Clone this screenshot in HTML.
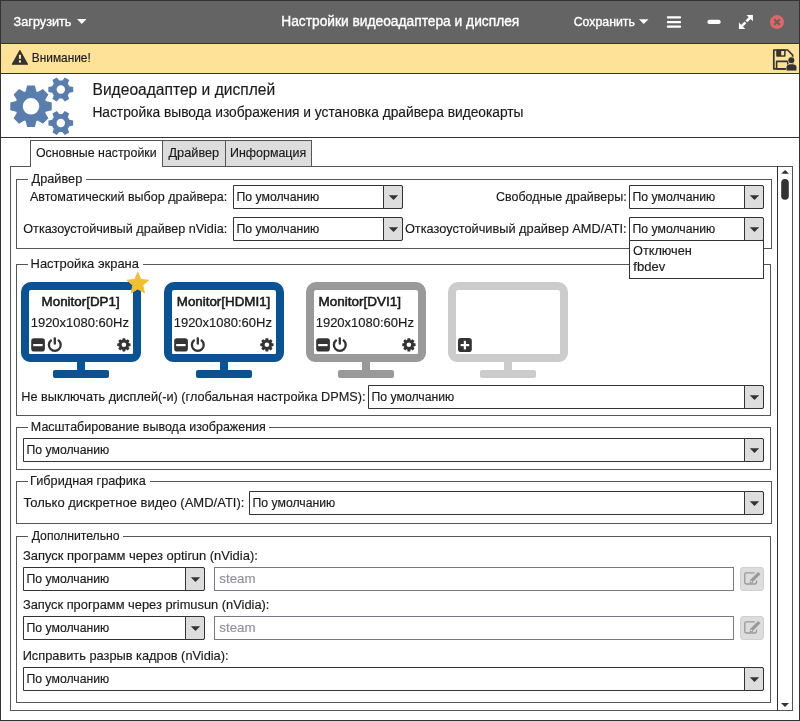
<!DOCTYPE html><html><head><meta charset="utf-8"><style>
html,body{margin:0;padding:0;background:#fff;}
body{width:800px;height:721px;position:relative;overflow:hidden;font-family:"Liberation Sans",sans-serif;}
#w{position:absolute;left:0;top:0;width:800px;height:721px;will-change:transform;background:#fff;}
.t{position:absolute;white-space:nowrap;line-height:1;-webkit-text-stroke:0.15px currentColor;}
.r{position:absolute;box-sizing:border-box;}
svg{position:absolute;left:0;top:0;}
</style></head><body><div id="w">
<div class="r" style="left:0px;top:0px;width:800px;height:721px;border:1px solid #333;"></div>
<div class="r" style="left:1px;top:1px;width:798px;height:42px;background:#646464;"></div>
<div class="r" style="left:1px;top:43px;width:798px;height:1px;background:#333;"></div>
<div class="r" style="left:1px;top:44px;width:798px;height:29px;background:#fee298;"></div>
<div class="r" style="left:1px;top:73px;width:798px;height:1px;background:#333;"></div>
<div class="r" style="left:1px;top:137px;width:798px;height:1px;background:#333;"></div>
<div class="t" style="left:13.62px;top:15.875px;font-size:12.67px;color:#fff;font-weight:400;-webkit-text-stroke:0.35px #fff">Загрузить</div>
<div class="t" style="left:281.2px;top:14.910px;font-size:13.78px;color:#fff;font-weight:400;-webkit-text-stroke:0.35px #fff">Настройки видеоадаптера и дисплея</div>
<div class="t" style="left:573.68px;top:15.979px;font-size:12.34px;color:#fff;font-weight:400;-webkit-text-stroke:0.35px #fff">Сохранить</div>
<div class="t" style="left:31.8px;top:52.719px;font-size:11.88px;color:#1a1a1a;font-weight:400;">Внимание!</div>
<div class="t" style="left:92.5px;top:82.020px;font-size:15.6px;color:#1a1a1a;font-weight:400;">Видеоадаптер и дисплей</div>
<div class="t" style="left:92.4px;top:105.919px;font-size:13.77px;color:#1a1a1a;font-weight:400;">Настройка вывода изображения и установка драйвера видеокарты</div>
<div class="r" style="left:10px;top:166px;width:783px;height:545px;border:1px solid #555;"></div>
<div class="r" style="left:162px;top:140px;width:64px;height:27px;background:#ddd;border:1px solid #555;"></div>
<div class="r" style="left:225px;top:140px;width:87px;height:27px;background:#ddd;border:1px solid #555;"></div>
<div class="r" style="left:30px;top:140px;width:133px;height:27px;background:#fff;border:1px solid #555;border-bottom:none;"></div>
<div class="t" style="left:35.9px;top:146.987px;font-size:12.39px;color:#1a1a1a;font-weight:400;">Основные настройки</div>
<div class="t" style="left:168.5px;top:146.841px;font-size:12.74px;color:#1a1a1a;font-weight:400;">Драйвер</div>
<div class="t" style="left:230px;top:146.970px;font-size:12.44px;color:#1a1a1a;font-weight:400;">Информация</div>
<div class="r" style="left:777px;top:166px;width:1px;height:545px;background:#333;"></div>
<div class="r" style="left:16px;top:179px;width:756px;height:70px;border:1px solid #555;"></div>
<div class="r" style="left:28px;top:179px;width:58px;height:1px;background:#fff;"></div>
<div class="t" style="left:31.6px;top:172.849px;font-size:12.73px;color:#1a1a1a;font-weight:400;">Драйвер</div>
<div class="t" style="left:30px;top:190.927px;font-size:12.52px;color:#1a1a1a;font-weight:400;">Автоматический выбор драйвера:</div>
<div class="t" style="left:23.29px;top:222.884px;font-size:12.63px;color:#1a1a1a;font-weight:400;">Отказоустойчивый драйвер nVidia:</div>
<div class="r" style="left:233px;top:185px;width:170px;height:24px;border:1px solid #333;background:#fff;border-radius:0 2px 2px 0;"></div>
<div class="r" style="left:383px;top:185px;width:20px;height:24px;border:1px solid #333;background:#ddd;border-radius:0 2px 2px 0;"></div>
<svg style="left:388px;top:195px" width="11" height="6"><path d="M0.8,0.2 L10.2,0.2 L5.5,4.9 Z" fill="#333"/></svg>
<div class="t" style="left:236.52px;top:191.014px;font-size:12.24px;color:#1a1a1a;font-weight:400;">По умолчанию</div>
<div class="r" style="left:233px;top:217px;width:170px;height:24px;border:1px solid #333;background:#fff;border-radius:0 2px 2px 0;"></div>
<div class="r" style="left:383px;top:217px;width:20px;height:24px;border:1px solid #333;background:#ddd;border-radius:0 2px 2px 0;"></div>
<svg style="left:388px;top:227px" width="11" height="6"><path d="M0.8,0.2 L10.2,0.2 L5.5,4.9 Z" fill="#333"/></svg>
<div class="t" style="left:236.52px;top:223.014px;font-size:12.24px;color:#1a1a1a;font-weight:400;">По умолчанию</div>
<div class="t" style="left:495.98px;top:190.961px;font-size:12.48px;color:#1a1a1a;font-weight:400;">Свободные драйверы:</div>
<div class="t" style="left:404.89px;top:222.840px;font-size:12.77px;color:#1a1a1a;font-weight:400;">Отказоустойчивый драйвер AMD/ATI:</div>
<div class="r" style="left:629px;top:185px;width:135px;height:24px;border:1px solid #333;background:#fff;border-radius:0 2px 2px 0;"></div>
<div class="r" style="left:744px;top:185px;width:20px;height:24px;border:1px solid #333;background:#ddd;border-radius:0 2px 2px 0;"></div>
<svg style="left:749px;top:195px" width="11" height="6"><path d="M0.8,0.2 L10.2,0.2 L5.5,4.9 Z" fill="#333"/></svg>
<div class="t" style="left:632.52px;top:191.014px;font-size:12.24px;color:#1a1a1a;font-weight:400;">По умолчанию</div>
<div class="r" style="left:16px;top:264px;width:755px;height:152px;border:1px solid #555;"></div>
<div class="r" style="left:28px;top:264px;width:115px;height:1px;background:#fff;"></div>
<div class="t" style="left:30.56px;top:257.754px;font-size:12.96px;color:#1a1a1a;font-weight:400;">Настройка экрана</div>
<div class="t" style="left:21.33px;top:390.866px;font-size:12.71px;color:#1a1a1a;font-weight:400;">Не выключать дисплей(-и) (глобальная настройка DPMS):</div>
<div class="r" style="left:368px;top:385px;width:396px;height:24px;border:1px solid #333;background:#fff;border-radius:0 2px 2px 0;"></div>
<div class="r" style="left:744px;top:385px;width:20px;height:24px;border:1px solid #333;background:#ddd;border-radius:0 2px 2px 0;"></div>
<svg style="left:749px;top:395px" width="11" height="6"><path d="M0.8,0.2 L10.2,0.2 L5.5,4.9 Z" fill="#333"/></svg>
<div class="t" style="left:371.52px;top:391.014px;font-size:12.24px;color:#1a1a1a;font-weight:400;">По умолчанию</div>
<div class="r" style="left:16px;top:427px;width:755px;height:43px;border:1px solid #555;"></div>
<div class="r" style="left:28px;top:427px;width:241px;height:1px;background:#fff;"></div>
<div class="t" style="left:30.85px;top:420.952px;font-size:12.49px;color:#1a1a1a;font-weight:400;">Масштабирование вывода изображения</div>
<div class="r" style="left:23px;top:438px;width:741px;height:24px;border:1px solid #333;background:#fff;border-radius:0 2px 2px 0;"></div>
<div class="r" style="left:744px;top:438px;width:20px;height:24px;border:1px solid #333;background:#ddd;border-radius:0 2px 2px 0;"></div>
<svg style="left:749px;top:448px" width="11" height="6"><path d="M0.8,0.2 L10.2,0.2 L5.5,4.9 Z" fill="#333"/></svg>
<div class="t" style="left:26.52px;top:444.014px;font-size:12.24px;color:#1a1a1a;font-weight:400;">По умолчанию</div>
<div class="r" style="left:16px;top:481px;width:756px;height:43px;border:1px solid #555;"></div>
<div class="r" style="left:28px;top:481px;width:122px;height:1px;background:#fff;"></div>
<div class="t" style="left:30.08px;top:474.858px;font-size:12.69px;color:#1a1a1a;font-weight:400;">Гибридная графика</div>
<div class="t" style="left:23.39px;top:496.020px;font-size:13.0px;color:#1a1a1a;font-weight:400;">Только дискретное видео (AMD/ATI):</div>
<div class="r" style="left:249px;top:491px;width:515px;height:24px;border:1px solid #333;background:#fff;border-radius:0 2px 2px 0;"></div>
<div class="r" style="left:744px;top:491px;width:20px;height:24px;border:1px solid #333;background:#ddd;border-radius:0 2px 2px 0;"></div>
<svg style="left:749px;top:501px" width="11" height="6"><path d="M0.8,0.2 L10.2,0.2 L5.5,4.9 Z" fill="#333"/></svg>
<div class="t" style="left:252.52px;top:497.014px;font-size:12.24px;color:#1a1a1a;font-weight:400;">По умолчанию</div>
<div class="r" style="left:16px;top:536px;width:755px;height:167px;border:1px solid #555;"></div>
<div class="r" style="left:28px;top:536px;width:95px;height:1px;background:#fff;"></div>
<div class="t" style="left:31.7px;top:530.022px;font-size:12.23px;color:#1a1a1a;font-weight:400;">Дополнительно</div>
<div class="t" style="left:22.91px;top:549.754px;font-size:12.96px;color:#1a1a1a;font-weight:400;">Запуск программ через optirun (nVidia):</div>
<div class="r" style="left:23px;top:567px;width:182px;height:24px;border:1px solid #333;background:#fff;border-radius:0 2px 2px 0;"></div>
<div class="r" style="left:185px;top:567px;width:20px;height:24px;border:1px solid #333;background:#ddd;border-radius:0 2px 2px 0;"></div>
<svg style="left:190px;top:577px" width="11" height="6"><path d="M0.8,0.2 L10.2,0.2 L5.5,4.9 Z" fill="#333"/></svg>
<div class="t" style="left:26.52px;top:573.014px;font-size:12.24px;color:#1a1a1a;font-weight:400;">По умолчанию</div>
<div class="r" style="left:214px;top:567px;width:520px;height:24px;border:1px solid #787887;background:#fff;"></div>
<div class="t" style="left:219.34px;top:572.017px;font-size:13.3px;color:#90909a;font-weight:400;">steam</div>
<div class="r" style="left:740px;top:567px;width:24px;height:24px;background:#ddd;border:1px solid #d0d0d0;border-radius:3px;"></div>
<svg width="800" height="721"><g transform="translate(0,0)"><path d="M754.7,572.8 L746.2,572.8 Q744.8,572.8 744.8,574.2 L744.8,582.6 Q744.8,584 746.2,584 L755.1,584 Q756.5,584 756.5,582.6 L756.5,580.5" fill="none" stroke="#999" stroke-width="1.3"/><path d="M751.5,580.9 L759.3,573.1" stroke="#999" stroke-width="3.3"/><path d="M749.6,583.4 L750.2,579.6 L753.3,582.7 Z" fill="#999"/><circle cx="751.2" cy="581.6" r="0.75" fill="#f4f4f4"/></g></svg>
<div class="t" style="left:22.91px;top:598.797px;font-size:12.85px;color:#1a1a1a;font-weight:400;">Запуск программ через primusun (nVidia):</div>
<div class="r" style="left:23px;top:616px;width:182px;height:24px;border:1px solid #333;background:#fff;border-radius:0 2px 2px 0;"></div>
<div class="r" style="left:185px;top:616px;width:20px;height:24px;border:1px solid #333;background:#ddd;border-radius:0 2px 2px 0;"></div>
<svg style="left:190px;top:626px" width="11" height="6"><path d="M0.8,0.2 L10.2,0.2 L5.5,4.9 Z" fill="#333"/></svg>
<div class="t" style="left:26.52px;top:622.014px;font-size:12.24px;color:#1a1a1a;font-weight:400;">По умолчанию</div>
<div class="r" style="left:214px;top:616px;width:520px;height:24px;border:1px solid #787887;background:#fff;"></div>
<div class="t" style="left:219.34px;top:621.017px;font-size:13.3px;color:#90909a;font-weight:400;">steam</div>
<div class="r" style="left:740px;top:616px;width:24px;height:24px;background:#ddd;border:1px solid #d0d0d0;border-radius:3px;"></div>
<svg width="800" height="721"><g transform="translate(0,49)"><path d="M754.7,572.8 L746.2,572.8 Q744.8,572.8 744.8,574.2 L744.8,582.6 Q744.8,584 746.2,584 L755.1,584 Q756.5,584 756.5,582.6 L756.5,580.5" fill="none" stroke="#999" stroke-width="1.3"/><path d="M751.5,580.9 L759.3,573.1" stroke="#999" stroke-width="3.3"/><path d="M749.6,583.4 L750.2,579.6 L753.3,582.7 Z" fill="#999"/><circle cx="751.2" cy="581.6" r="0.75" fill="#f4f4f4"/></g></svg>
<div class="t" style="left:22.67px;top:649.806px;font-size:12.81px;color:#1a1a1a;font-weight:400;">Исправить разрыв кадров (nVidia):</div>
<div class="r" style="left:23px;top:667px;width:741px;height:24px;border:1px solid #333;background:#fff;border-radius:0 2px 2px 0;"></div>
<div class="r" style="left:744px;top:667px;width:20px;height:24px;border:1px solid #333;background:#ddd;border-radius:0 2px 2px 0;"></div>
<svg style="left:749px;top:677px" width="11" height="6"><path d="M0.8,0.2 L10.2,0.2 L5.5,4.9 Z" fill="#333"/></svg>
<div class="t" style="left:26.52px;top:673.014px;font-size:12.24px;color:#1a1a1a;font-weight:400;">По умолчанию</div>
<div class="r" style="left:21px;top:282px;width:120px;height:80px;border:8px solid #095294;border-radius:10px 10px 9px 9px;"></div>
<div class="r" style="left:77px;top:362px;width:8px;height:8px;background:#095294;"></div>
<div class="r" style="left:53px;top:370px;width:56px;height:8px;background:#095294;border-radius:2px;"></div>
<div class="t" style="left:41.6px;top:294.990px;font-size:13.39px;color:#1a1a1a;font-weight:400;-webkit-text-stroke:0.55px #1a1a1a">Monitor[DP1]</div>
<div class="t" style="left:30.689999999999998px;top:315.979px;font-size:12.99px;color:#1a1a1a;font-weight:400;">1920x1080:60Hz</div>
<svg width="800" height="721"><rect x="31.2" y="338.3" width="13.7" height="13.2" rx="2.8" fill="#333"/><rect x="33.2" y="344" width="9.4" height="2.2" fill="#fff"/><path d="M58.59,340.43 A5.9,5.9 0 1,1 51.01,340.43" fill="none" stroke="#333" stroke-width="2.3" stroke-linecap="round"/><path d="M54.8,338.34999999999997 L54.8,343.65" stroke="#333" stroke-width="2.3" stroke-linecap="round"/><path fill-rule="evenodd" fill="#333" d="M122.20,340.10 L122.60,338.13 L125.20,338.13 L125.60,340.10 A5.0,5.0 0 0,1 126.02,340.27 L127.70,339.16 L129.54,341.00 L128.43,342.68 A5.0,5.0 0 0,1 128.60,343.10 L130.57,343.50 L130.57,346.10 L128.60,346.50 A5.0,5.0 0 0,1 128.43,346.92 L129.54,348.60 L127.70,350.44 L126.02,349.33 A5.0,5.0 0 0,1 125.60,349.50 L125.20,351.47 L122.60,351.47 L122.20,349.50 A5.0,5.0 0 0,1 121.78,349.33 L120.10,350.44 L118.26,348.60 L119.37,346.92 A5.0,5.0 0 0,1 119.20,346.50 L117.23,346.10 L117.23,343.50 L119.20,343.10 A5.0,5.0 0 0,1 119.37,342.68 L118.26,341.00 L120.10,339.16 L121.78,340.27 A5.0,5.0 0 0,1 122.20,340.10 Z M126.20,344.80 A2.3,2.3 0 1,0 121.60,344.80 A2.3,2.3 0 1,0 126.20,344.80 Z"/><path d="M137.80,272.40 L140.86,279.49 L148.55,280.21 L142.75,285.31 L144.44,292.84 L137.80,288.90 L131.16,292.84 L132.85,285.31 L127.05,280.21 L134.74,279.49 Z" fill="#f0c030" stroke="#f0c030" stroke-width="1" stroke-linejoin="round"/></svg>
<div class="r" style="left:164px;top:282px;width:120px;height:80px;border:8px solid #095294;border-radius:10px 10px 9px 9px;"></div>
<div class="r" style="left:220px;top:362px;width:8px;height:8px;background:#095294;"></div>
<div class="r" style="left:196px;top:370px;width:56px;height:8px;background:#095294;border-radius:2px;"></div>
<div class="t" style="left:176.75px;top:295.016px;font-size:13.36px;color:#1a1a1a;font-weight:400;-webkit-text-stroke:0.55px #1a1a1a">Monitor[HDMI1]</div>
<div class="t" style="left:173.69px;top:315.979px;font-size:12.99px;color:#1a1a1a;font-weight:400;">1920x1080:60Hz</div>
<svg width="800" height="721"><rect x="174.2" y="338.3" width="13.7" height="13.2" rx="2.8" fill="#333"/><rect x="176.2" y="344" width="9.4" height="2.2" fill="#fff"/><path d="M201.59,340.43 A5.9,5.9 0 1,1 194.01,340.43" fill="none" stroke="#333" stroke-width="2.3" stroke-linecap="round"/><path d="M197.8,338.34999999999997 L197.8,343.65" stroke="#333" stroke-width="2.3" stroke-linecap="round"/><path fill-rule="evenodd" fill="#333" d="M265.20,340.10 L265.60,338.13 L268.20,338.13 L268.60,340.10 A5.0,5.0 0 0,1 269.02,340.27 L270.70,339.16 L272.54,341.00 L271.43,342.68 A5.0,5.0 0 0,1 271.60,343.10 L273.57,343.50 L273.57,346.10 L271.60,346.50 A5.0,5.0 0 0,1 271.43,346.92 L272.54,348.60 L270.70,350.44 L269.02,349.33 A5.0,5.0 0 0,1 268.60,349.50 L268.20,351.47 L265.60,351.47 L265.20,349.50 A5.0,5.0 0 0,1 264.78,349.33 L263.10,350.44 L261.26,348.60 L262.37,346.92 A5.0,5.0 0 0,1 262.20,346.50 L260.23,346.10 L260.23,343.50 L262.20,343.10 A5.0,5.0 0 0,1 262.37,342.68 L261.26,341.00 L263.10,339.16 L264.78,340.27 A5.0,5.0 0 0,1 265.20,340.10 Z M269.20,344.80 A2.3,2.3 0 1,0 264.60,344.80 A2.3,2.3 0 1,0 269.20,344.80 Z"/></svg>
<div class="r" style="left:306px;top:282px;width:120px;height:80px;border:8px solid #999999;border-radius:10px 10px 9px 9px;"></div>
<div class="r" style="left:362px;top:362px;width:8px;height:8px;background:#999999;"></div>
<div class="r" style="left:338px;top:370px;width:56px;height:8px;background:#999999;border-radius:2px;"></div>
<div class="t" style="left:318.6px;top:294.989px;font-size:13.51px;color:#1a1a1a;font-weight:400;-webkit-text-stroke:0.55px #1a1a1a">Monitor[DVI1]</div>
<div class="t" style="left:315.69px;top:315.979px;font-size:12.99px;color:#1a1a1a;font-weight:400;">1920x1080:60Hz</div>
<svg width="800" height="721"><rect x="316.2" y="338.3" width="13.7" height="13.2" rx="2.8" fill="#333"/><rect x="318.2" y="344" width="9.4" height="2.2" fill="#fff"/><path d="M343.59,340.43 A5.9,5.9 0 1,1 336.01,340.43" fill="none" stroke="#333" stroke-width="2.3" stroke-linecap="round"/><path d="M339.8,338.34999999999997 L339.8,343.65" stroke="#333" stroke-width="2.3" stroke-linecap="round"/><path fill-rule="evenodd" fill="#333" d="M407.20,340.10 L407.60,338.13 L410.20,338.13 L410.60,340.10 A5.0,5.0 0 0,1 411.02,340.27 L412.70,339.16 L414.54,341.00 L413.43,342.68 A5.0,5.0 0 0,1 413.60,343.10 L415.57,343.50 L415.57,346.10 L413.60,346.50 A5.0,5.0 0 0,1 413.43,346.92 L414.54,348.60 L412.70,350.44 L411.02,349.33 A5.0,5.0 0 0,1 410.60,349.50 L410.20,351.47 L407.60,351.47 L407.20,349.50 A5.0,5.0 0 0,1 406.78,349.33 L405.10,350.44 L403.26,348.60 L404.37,346.92 A5.0,5.0 0 0,1 404.20,346.50 L402.23,346.10 L402.23,343.50 L404.20,343.10 A5.0,5.0 0 0,1 404.37,342.68 L403.26,341.00 L405.10,339.16 L406.78,340.27 A5.0,5.0 0 0,1 407.20,340.10 Z M411.20,344.80 A2.3,2.3 0 1,0 406.60,344.80 A2.3,2.3 0 1,0 411.20,344.80 Z"/></svg>
<div class="r" style="left:448px;top:282px;width:120px;height:80px;border:8px solid #cccccc;border-radius:10px 10px 9px 9px;"></div>
<div class="r" style="left:504px;top:362px;width:8px;height:8px;background:#cccccc;"></div>
<div class="r" style="left:480px;top:370px;width:56px;height:8px;background:#cccccc;border-radius:2px;"></div>
<svg width="800" height="721"><rect x="458" y="338" width="13.8" height="14" rx="2.8" fill="#333"/><rect x="460.6" y="344" width="8.6" height="2.2" fill="#fff"/><rect x="463.8" y="340.8" width="2.2" height="8.6" fill="#fff"/></svg>
<svg width="800" height="721"><path d="M77,19 L86.5,19 L81.75,24 Z" fill="#fff"/><path d="M639,19.3 L648.5,19.3 L643.75,24 Z" fill="#fff"/><rect x="666.8" y="16.2" width="14.3" height="2.4" rx="1" fill="#fff"/><rect x="666.8" y="20.9" width="14.3" height="2.4" rx="1" fill="#fff"/><rect x="666.8" y="25.4" width="14.3" height="2.4" rx="1" fill="#fff"/><rect x="707.5" y="19.8" width="13.1" height="4.2" rx="1.8" fill="#fff"/><path d="M746.5,14.9 L752.9,14.9 L752.9,21.3 Z M738.9,22.5 L738.9,28.9 L745.3,28.9 Z" fill="#fff"/><path d="M741,26.8 L745.4,22.4 M746.4,21.4 L750.8,17" stroke="#fff" stroke-width="2.5"/><circle cx="777" cy="22.1" r="7" fill="#e26666"/><path d="M774.2,19.3 L779.8,24.9 M779.8,19.3 L774.2,24.9" stroke="#646464" stroke-width="2.2"/><path d="M19.9,50.6 L27.5,64.2 L12.3,64.2 Z" fill="#333" stroke="#333" stroke-width="1.1" stroke-linejoin="round"/><rect x="18.9" y="54.8" width="2.1" height="4.1" fill="#fee298"/><rect x="18.9" y="60.3" width="2.1" height="2.3" fill="#fee298"/><path d="M773.8,50 L787.6,50 L792.6,55 L792.6,68.9 L773.8,68.9 Z" fill="none" stroke="#333" stroke-width="1.7" stroke-linejoin="round"/><rect x="776.2" y="49.5" width="9.4" height="7.2" rx="0.9" fill="#333"/><rect x="781.2" y="51" width="2.9" height="4.3" fill="#fee298"/><rect x="776.6" y="61.4" width="11.2" height="7.5" rx="0.5" fill="none" stroke="#333" stroke-width="1.6"/><circle cx="791.3" cy="60.2" r="3.6" fill="#fee298"/><circle cx="791.3" cy="60.2" r="3.0" fill="#333"/><path d="M786.4,70.6 L786.4,67.6 Q786.4,64.1 790,64.1 L792.9,64.1 Q796.6,64.1 796.6,67.6 L796.6,70.6 Z" fill="#333" stroke="#fee298" stroke-width="0.9"/><path d="M786.6,70.5 L786.6,67.6 Q786.6,64.4 790,64.4 L792.9,64.4 Q796.4,64.4 796.4,67.6 L796.4,70.5 Z" fill="#333"/><path d="M781.2,173.8 L789,173.8 L785.1,169.9 Z" fill="#333"/><rect x="781.2" y="179" width="7.6" height="20.8" rx="3.8" fill="#333"/><path d="M781,703.1 L789,703.1 L785,707 Z" fill="#333"/></svg>
<div class="r" style="left:629px;top:217px;width:135px;height:24px;border:1px solid #333;background:#fff;border-radius:0 2px 2px 0;"></div>
<div class="r" style="left:744px;top:217px;width:20px;height:24px;border:1px solid #333;background:#ddd;border-radius:0 2px 2px 0;"></div>
<svg style="left:749px;top:227px" width="11" height="6"><path d="M0.8,0.2 L10.2,0.2 L5.5,4.9 Z" fill="#333"/></svg>
<div class="t" style="left:632.52px;top:223.014px;font-size:12.24px;color:#1a1a1a;font-weight:400;">По умолчанию</div>
<div class="r" style="left:629px;top:240px;width:135px;height:39px;border:1px solid #333;background:#fff;"></div>
<div class="t" style="left:632.99px;top:244.858px;font-size:12.72px;color:#1a1a1a;font-weight:400;">Отключен</div>
<div class="t" style="left:633.37px;top:260.020px;font-size:13.0px;color:#1a1a1a;font-weight:400;">fbdev</div>
<svg width="800" height="721" style="pointer-events:none"><path fill-rule="evenodd" fill="#597ead" d="M25.60,91.56 L27.10,85.56 L34.90,85.56 L36.40,91.56 A15.7,15.7 0 0,1 37.61,92.06 L42.91,88.88 L48.42,94.39 L45.24,99.69 A15.7,15.7 0 0,1 45.74,100.90 L51.74,102.40 L51.74,110.20 L45.74,111.70 A15.7,15.7 0 0,1 45.24,112.91 L48.42,118.21 L42.91,123.72 L37.61,120.54 A15.7,15.7 0 0,1 36.40,121.04 L34.90,127.04 L27.10,127.04 L25.60,121.04 A15.7,15.7 0 0,1 24.39,120.54 L19.09,123.72 L13.58,118.21 L16.76,112.91 A15.7,15.7 0 0,1 16.26,111.70 L10.26,110.20 L10.26,102.40 L16.26,100.90 A15.7,15.7 0 0,1 16.76,99.69 L13.58,94.39 L19.09,88.88 L24.39,92.06 A15.7,15.7 0 0,1 25.60,91.56 Z M39.30,106.30 A8.3,8.3 0 1,0 22.70,106.30 A8.3,8.3 0 1,0 39.30,106.30 Z"/><path fill-rule="evenodd" fill="#597ead" d="M69.32,86.30 L73.25,87.00 L73.25,92.00 L69.32,92.70 A9.1,9.1 0 0,1 67.83,95.28 L69.19,99.03 L64.86,101.53 L62.29,98.48 A9.1,9.1 0 0,1 59.31,98.48 L56.74,101.53 L52.41,99.03 L53.77,95.28 A9.1,9.1 0 0,1 52.28,92.70 L48.35,92.00 L48.35,87.00 L52.28,86.30 A9.1,9.1 0 0,1 53.77,83.72 L52.41,79.97 L56.74,77.47 L59.31,80.52 A9.1,9.1 0 0,1 62.29,80.52 L64.86,77.47 L69.19,79.97 L67.83,83.72 A9.1,9.1 0 0,1 69.32,86.30 Z M65.00,89.50 A4.2,4.2 0 1,0 56.60,89.50 A4.2,4.2 0 1,0 65.00,89.50 Z"/><path fill-rule="evenodd" fill="#597ead" d="M69.32,119.80 L73.15,120.50 L73.15,125.50 L69.32,126.20 A9.1,9.1 0 0,1 67.83,128.78 L69.14,132.44 L64.81,134.94 L62.29,131.98 A9.1,9.1 0 0,1 59.31,131.98 L56.79,134.94 L52.46,132.44 L53.77,128.78 A9.1,9.1 0 0,1 52.28,126.20 L48.45,125.50 L48.45,120.50 L52.28,119.80 A9.1,9.1 0 0,1 53.77,117.22 L52.46,113.56 L56.79,111.06 L59.31,114.02 A9.1,9.1 0 0,1 62.29,114.02 L64.81,111.06 L69.14,113.56 L67.83,117.22 A9.1,9.1 0 0,1 69.32,119.80 Z M65.00,123.00 A4.2,4.2 0 1,0 56.60,123.00 A4.2,4.2 0 1,0 65.00,123.00 Z"/></svg>
</div></body></html>
